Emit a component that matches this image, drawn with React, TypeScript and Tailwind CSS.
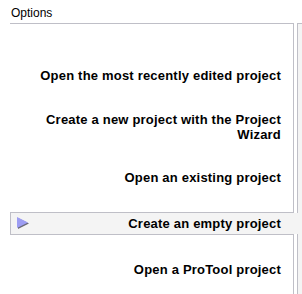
import React from 'react';

type Option = {
  label: string;
  tall?: boolean;
  selected?: boolean;
};

const options: Option[] = [
  { label: 'Open the most recently edited project' },
  { label: 'Create a new project with the Project Wizard', tall: true },
  { label: 'Open an existing project' },
  { label: 'Create an empty project', selected: true },
  { label: 'Open a ProTool project' },
];

const Arrow = () => (
  <svg width="13" height="13" viewBox="0 0 13 13" className="block">
    <polygon points="1,1 12,6.5 1,12" fill="#6a6a78" />
    <polygon points="0,0 11,5.5 0,11" fill="#9d9df3" />
  </svg>
);

const App: React.FC = () => {
  return (
    <div className="w-[302px] h-[294px] overflow-hidden bg-white text-black font-['Liberation_Sans',Arial,sans-serif]">
      <div className="h-[23px] pl-[11px] pt-[6px] text-[12px] leading-[15px]">Options</div>
      <div className="flex h-[271px]">
        <div className="ml-[10px] w-[284px] border-t border-r border-[#bfbfc7] pt-[40px] flex flex-col gap-[23px]">
          {options.map((o) =>
            o.selected ? (
              <div
                key={o.label}
                className="relative h-[23px] flex items-center border-l border-t border-b border-[#bfbfc7] bg-[#f4f4f4] pl-[6px] pr-[12px]"
              >
                <Arrow />
                <span className="ml-auto text-[13px] leading-[15px] tracking-[0.2px] font-bold text-right">{o.label}</span>
                <div className="absolute left-full top-0 bottom-0 w-[9px] bg-[#f4f4f4]" />
              </div>
            ) : (
              <div
                key={o.label}
                className={`${o.tall ? 'h-[33px]' : 'h-[23px]'} flex items-center justify-end pl-[20px] pr-[12px]`}
              >
                <span className="text-[13px] leading-[15px] tracking-[0.2px] font-bold text-right">{o.label}</span>
              </div>
            )
          )}
        </div>
        <div className="ml-[3px] flex-1 border-l border-t border-[#bfbfc7] bg-[#f4f4f4]" />
      </div>
    </div>
  );
};

export default App;
